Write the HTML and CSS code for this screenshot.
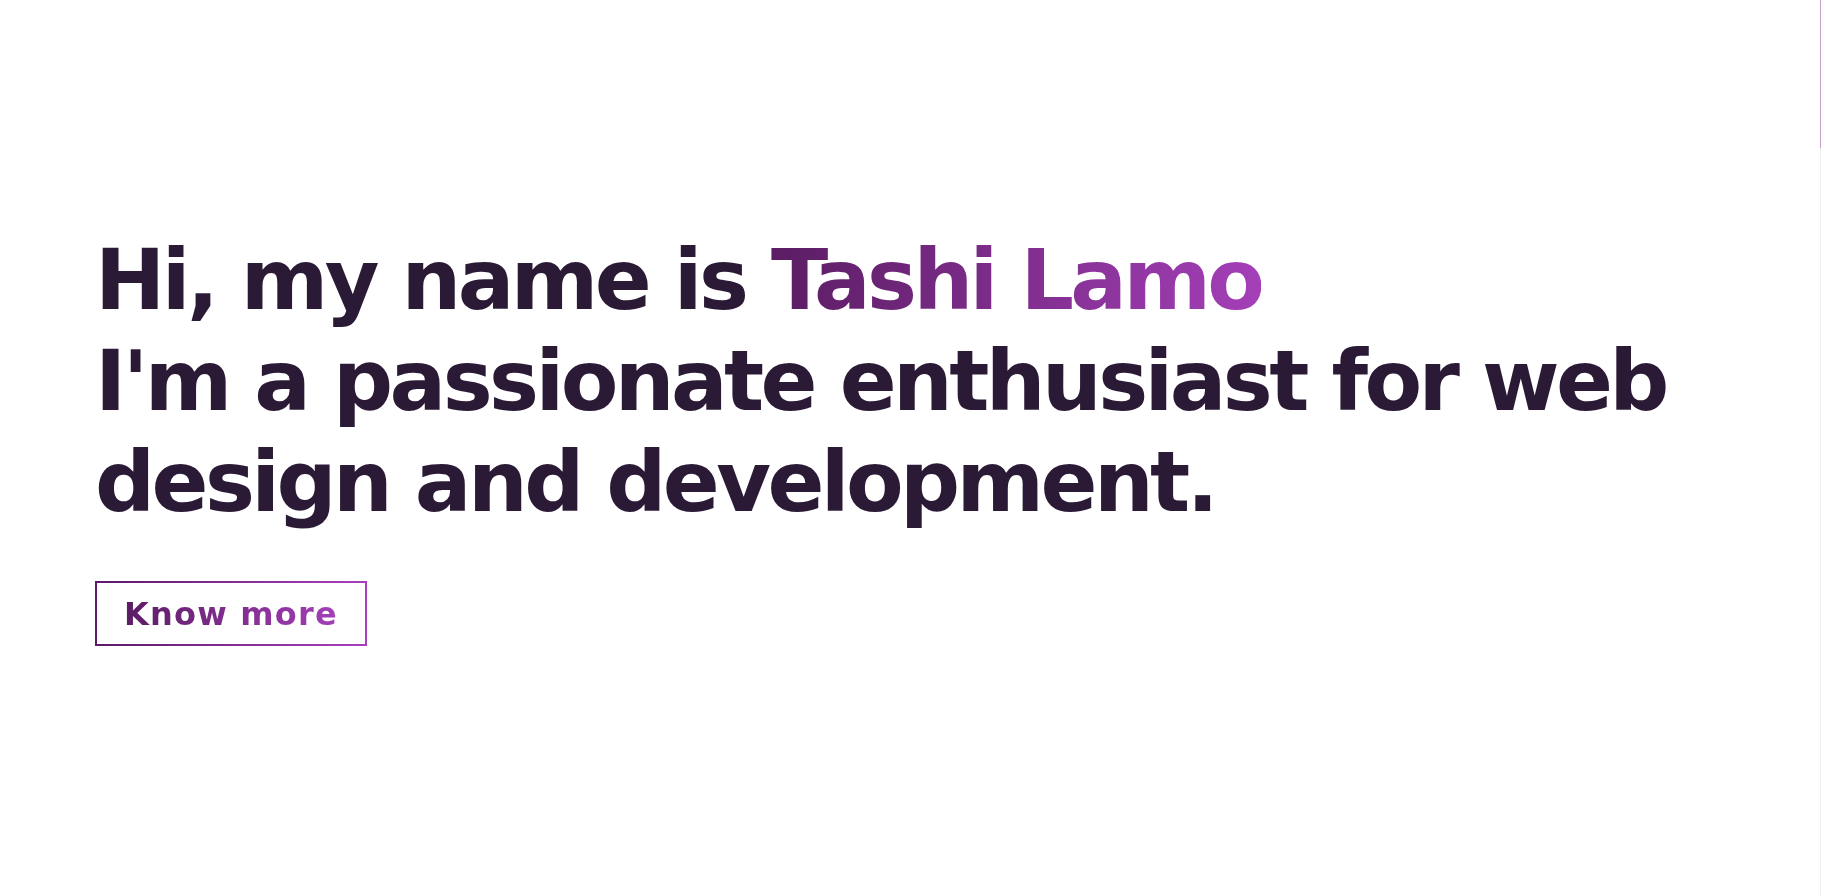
FILE: index.html
```html
<!DOCTYPE html>
<html lang="en">
<head>
<meta charset="utf-8">
<title>Tashi Lamo</title>
<link rel="stylesheet" href="styles.css">
</head>
<body>
<main class="hero">
  <h1 class="hero-title">Hi, my name is <span class="grad-text">Tashi Lamo</span><br>I'm a passionate enthusiast for web design and development.</h1>
  <a class="btn" href="#about"><span class="grad-text">Know more</span></a>
</main>
<div class="scroll-track"><div class="scroll-thumb"></div></div>
</body>
</html>
```
FILE: styles.css
```css
html, body {
  margin: 0;
  padding: 0;
  background: #ffffff;
  height: 100%;
  overflow: hidden;
}
body {
  font-family: "DejaVu Sans", "Open Sans", sans-serif;
  color: #2a1a35;
}
.hero {
  padding: 230px 0 0 95px;
  display: flex;
  flex-direction: column;
  align-items: flex-start;
}
.hero-title {
  margin: 0;
  font-size: 84px;
  font-weight: 700;
  line-height: 1.2;
  letter-spacing: -3.6px;
  max-width: 1640px;
  color: #2a1a35;
}
.grad-text {
  background: linear-gradient(90deg, #5b1d63 0%, #a43fb8 100%);
  -webkit-background-clip: text;
  background-clip: text;
  color: transparent;
}
.btn {
  margin-top: 49px;
  display: inline-flex;
  align-items: center;
  box-sizing: border-box;
  height: 65px;
  padding: 0 27px 0 27px;
  border: 2px solid;
  border-image: linear-gradient(90deg, #5c1a68, #a93fbc) 1;
  font-size: 32px;
  font-weight: 700;
  letter-spacing: 1.2px;
  text-decoration: none;
}
.scroll-track {
  position: fixed;
  top: 0;
  right: 0;
  width: 1px;
  height: 100%;
  background: #eeeeee;
}
.scroll-thumb {
  width: 1px;
  height: 148px;
  background: #c4a0c8;
}
```
